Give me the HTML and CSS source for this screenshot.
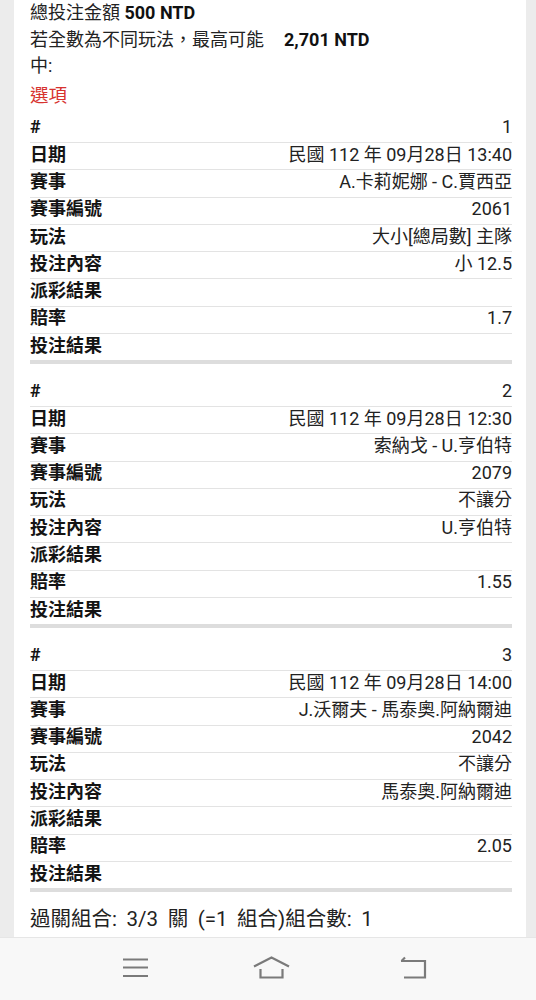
FILE: index.html
```html
<!DOCTYPE html>
<html lang="zh-Hant">
<head>
<meta charset="utf-8">
<title>投注明細</title>
<link rel="stylesheet" href="styles.css">
</head>
<body>
<div class="card">
  <div class="summary">
    <div class="line">總投注金額 <b>500 NTD</b></div>
    <div class="line split">
      <span class="split-label">若全數為不同玩法，最高可能中:</span>
      <b class="split-value">2,701 NTD</b>
    </div>
  </div>
  <div class="section-title">選項</div>

  <div class="group">
    <div class="row"><span class="lbl">#</span><span class="val">1</span></div>
    <div class="row"><span class="lbl">日期</span><span class="val">民國 112 年 09月28日 13:40</span></div>
    <div class="row"><span class="lbl">賽事</span><span class="val">A.卡莉妮娜 - C.賈西亞</span></div>
    <div class="row"><span class="lbl">賽事編號</span><span class="val">2061</span></div>
    <div class="row"><span class="lbl">玩法</span><span class="val">大小[總局數] 主隊</span></div>
    <div class="row"><span class="lbl">投注內容</span><span class="val">小 12.5</span></div>
    <div class="row"><span class="lbl">派彩結果</span><span class="val"></span></div>
    <div class="row"><span class="lbl">賠率</span><span class="val">1.7</span></div>
    <div class="row"><span class="lbl">投注結果</span><span class="val"></span></div>
  </div>

  <div class="group">
    <div class="row"><span class="lbl">#</span><span class="val">2</span></div>
    <div class="row"><span class="lbl">日期</span><span class="val">民國 112 年 09月28日 12:30</span></div>
    <div class="row"><span class="lbl">賽事</span><span class="val">索納戈 - U.亨伯特</span></div>
    <div class="row"><span class="lbl">賽事編號</span><span class="val">2079</span></div>
    <div class="row"><span class="lbl">玩法</span><span class="val">不讓分</span></div>
    <div class="row"><span class="lbl">投注內容</span><span class="val">U.亨伯特</span></div>
    <div class="row"><span class="lbl">派彩結果</span><span class="val"></span></div>
    <div class="row"><span class="lbl">賠率</span><span class="val">1.55</span></div>
    <div class="row"><span class="lbl">投注結果</span><span class="val"></span></div>
  </div>

  <div class="group">
    <div class="row"><span class="lbl">#</span><span class="val">3</span></div>
    <div class="row"><span class="lbl">日期</span><span class="val">民國 112 年 09月28日 14:00</span></div>
    <div class="row"><span class="lbl">賽事</span><span class="val">J.沃爾夫 - 馬泰奧.阿納爾迪</span></div>
    <div class="row"><span class="lbl">賽事編號</span><span class="val">2042</span></div>
    <div class="row"><span class="lbl">玩法</span><span class="val">不讓分</span></div>
    <div class="row"><span class="lbl">投注內容</span><span class="val">馬泰奧.阿納爾迪</span></div>
    <div class="row"><span class="lbl">派彩結果</span><span class="val"></span></div>
    <div class="row"><span class="lbl">賠率</span><span class="val">2.05</span></div>
    <div class="row"><span class="lbl">投注結果</span><span class="val"></span></div>
  </div>

  <div class="combo">過關組合: 3/3 關 (=1 組合)組合數: 1</div>
</div>

<nav class="navbar">
  <svg class="nav-icons" width="536" height="63" viewBox="0 0 536 63" fill="none" stroke="#7a7a7a" stroke-width="2.2" stroke-linecap="butt" stroke-linejoin="miter">
    <path d="M123 22.5H148M123 30.5H148M123 39H148"/>
    <path d="M254 29.5L271.5 20.5L289 29.5"/>
    <path d="M260.5 32V40.5H282.5V32"/>
    <path d="M404 40.5H425V24H401"/>
    <path d="M401.5 24L405 20.5"/>
  </svg>
</nav>
</body>
</html>
```

FILE: styles.css
```css
html, body {
  margin: 0;
  padding: 0;
}

body {
  background: #ececec;
  font-family: Roboto, "Noto Sans CJK TC", sans-serif;
  color: #1e1e1e;
  height: 1000px;
  overflow: hidden;
}

.card {
  margin: 0 10px 0 14px;
  background: #ffffff;
  padding: 0 14px 80px 16px;
  min-height: 1000px;
  box-sizing: border-box;
}

.summary {
  font-size: 18px;
  line-height: 26.5px;
  color: #222;
}

.summary b {
  font-weight: 700;
  color: #111;
}

.split {
  display: flex;
  align-items: flex-start;
}

.split-label {
  width: 240px;
}

.split-value {
  padding-left: 14px;
}

.section-title {
  color: #d7332f;
  font-size: 18.5px;
  line-height: 27px;
  margin-top: 3.5px;
  margin-bottom: 4.7px;
}

.group {
  border-bottom: 4px solid #dddddd;
  margin-bottom: 14.3px;
}

.row {
  height: 27.3px;
  box-sizing: border-box;
  display: flex;
  justify-content: space-between;
  align-items: center;
  font-size: 18px;
  line-height: 22px;
  padding-bottom: 3px;
}

.row + .row {
  border-top: 1px solid #e3e3e3;
}

.lbl {
  font-weight: 700;
  color: #141414;
}

.val {
  color: #222;
  text-align: right;
}

.combo {
  font-size: 20.5px;
  line-height: 27px;
  word-spacing: 4.5px;
  margin-top: -1px;
  color: #222;
}

.navbar {
  position: fixed;
  left: 0;
  bottom: 0;
  width: 536px;
  height: 63px;
  background: #f8f8f8;
  border-top: 1px solid #e6e6e6;
  box-sizing: border-box;
}

.nav-icons {
  display: block;
  position: absolute;
  top: -1px;
  left: 0;
}
```
